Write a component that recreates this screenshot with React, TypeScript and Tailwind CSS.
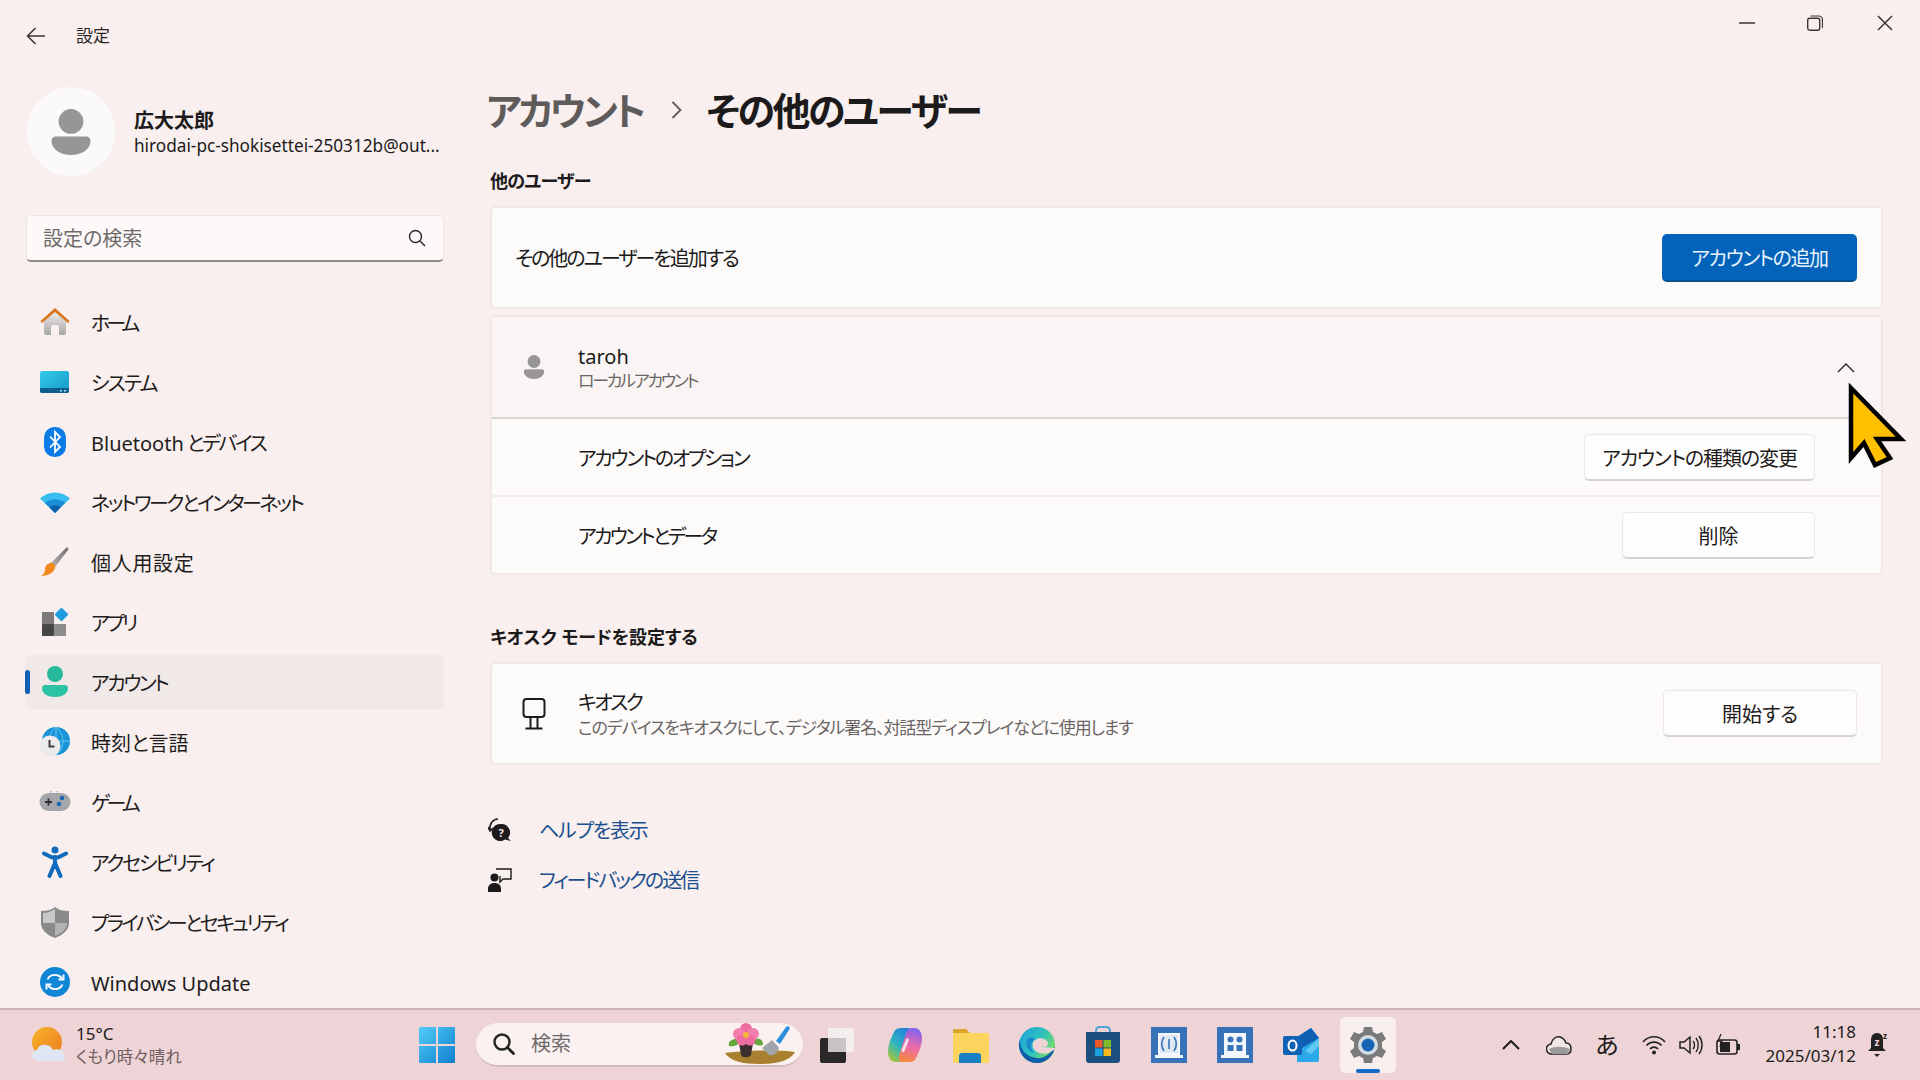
import React from "react";

const navItems = [
  { label: "ホーム", track: "tracking-[-4px]", icon: <HomeIcon /> },
  { label: "システム", track: "tracking-[-1.800px]", icon: <SystemIcon /> },
  { label: "Bluetooth", suffix: " とデバイス", track: "", icon: <BluetoothIcon /> },
  { label: "ネットワークとインターネット", track: "tracking-[-2.500px]", icon: <WifiIcon /> },
  { label: "個人用設定", track: "tracking-[0.700px]", icon: <BrushIcon /> },
  { label: "アプリ", track: "tracking-[-3px]", icon: <AppsIcon /> },
  { label: "アカウント", track: "tracking-[-2.400px]", icon: <AccountIcon />, active: true },
  { label: "時刻と言語", track: "", icon: <TimeIcon /> },
  { label: "ゲーム", track: "tracking-[-3.800px]", icon: <GameIcon /> },
  { label: "アクセシビリティ", track: "tracking-[-2.200px]", icon: <AccessIcon /> },
  { label: "プライバシーとセキュリティ", track: "tracking-[-2.700px]", icon: <ShieldIcon /> },
  { label: "Windows Update", track: "", icon: <UpdateIcon /> },
];

function HomeIcon() {
  return (
    <svg width="32" height="32" viewBox="0 0 32 32">
      <defs>
        <linearGradient id="homeWall" x1="0" y1="0" x2="0" y2="1">
          <stop offset="0" stopColor="#f3f1f0" />
          <stop offset="1" stopColor="#a9a7a6" />
        </linearGradient>
      </defs>
      <path d="M5 13 16 4l11 9v14a2 2 0 0 1-2 2h-5v-8a2 2 0 0 0-2-2h-4a2 2 0 0 0-2 2v8H7a2 2 0 0 1-2-2Z" fill="url(#homeWall)" />
      <path d="M1.500 15 16 2l14.500 13-1.500 2L16 6 3 17Z" fill="#d9761e" />
    </svg>
  );
}

function SystemIcon() {
  return (
    <svg width="30" height="24" viewBox="0 0 30 24">
      <defs>
        <linearGradient id="sysScreen" x1="0" y1="0" x2="1" y2="1">
          <stop offset="0" stopColor="#36cbe8" />
          <stop offset="1" stopColor="#1597c9" />
        </linearGradient>
      </defs>
      <rect x="0" y="1" width="29" height="22" rx="2" fill="url(#sysScreen)" />
      <path d="M0 18h29v3a2 2 0 0 1-2 2H2a2 2 0 0 1-2-2Z" fill="#0f5f8d" />
      <rect x="20" y="20" width="2" height="1.500" fill="#a7dcea" />
      <rect x="24" y="20" width="2" height="1.500" fill="#a7dcea" />
    </svg>
  );
}

function BluetoothIcon() {
  return (
    <svg width="24" height="32" viewBox="0 0 24 32">
      <rect x="1" y="1" width="22" height="30" rx="10.500" fill="#0b7ce6" />
      <path d="m7 10.500 10 10.500-5 5V6l5 5-10 10.500" fill="none" stroke="#fff" strokeWidth="1.800" />
    </svg>
  );
}

function WifiIcon() {
  return (
    <svg width="30" height="24" viewBox="0 0 30 24">
      <path d="M0 8.500C8 .5 22 .5 30 8.500L15 23Z" fill="#37bdf0" />
      <path d="M5 13C10 8 20 8 25 13L15 23Z" fill="#1c8ed8" />
      <path d="M9.500 17.500c3-3 8-3 11 0L15 23Z" fill="#0f5fa8" />
    </svg>
  );
}

function BrushIcon() {
  return (
    <svg width="30" height="30" viewBox="0 0 30 30">
      <defs>
        <linearGradient id="brushHandle" x1="0" y1="1" x2="1" y2="0">
          <stop offset="0" stopColor="#b9b7b6" />
          <stop offset="1" stopColor="#6e6c6c" />
        </linearGradient>
      </defs>
      <path d="M11 16 26 1c2-1 3 0 2 2L15 20Z" fill="url(#brushHandle)" />
      <path d="M10 16c3-1 6 2 5 5-1 4-6 8-14 8 3-2 4-4 4-7 0-3 2-5 5-6Z" fill="#f08a1d" />
    </svg>
  );
}

function AppsIcon() {
  return (
    <svg width="28" height="28" viewBox="0 0 28 28">
      <rect x="1" y="4" width="12" height="12" fill="#7c7a7b" />
      <rect x="1" y="16" width="12" height="12" rx="1" fill="#454446" />
      <rect x="13" y="16" width="12" height="12" fill="#8e8c8c" />
      <rect x="15.500" y="1.500" width="10" height="10" rx="1.500" fill="#1f9be0" transform="rotate(45 20.500 6.500)" />
    </svg>
  );
}

function AccountIcon() {
  return (
    <svg width="26" height="32" viewBox="0 0 26 32">
      <circle cx="13" cy="8" r="8" fill="#27b89c" />
      <path d="M0 22c0-2 1.500-3 3-3h20c1.500 0 3 1 3 3 0 6-6 9-13 9S0 28 0 22Z" fill="#2cc3a4" />
    </svg>
  );
}

function TimeIcon() {
  return (
    <svg width="32" height="32" viewBox="0 0 32 32">
      <circle cx="17" cy="15" r="14" fill="#1b93d8" />
      <path d="M17 1v28M3 15h28M17 1c-5 4-7 9-7 14s2 10 7 14M17 1c5 4 7 9 7 14s-2 10-7 14" fill="none" stroke="#5ec8ec" strokeWidth="1" />
      <circle cx="11" cy="20" r="10.500" fill="#eceaea" />
      <path d="M10.500 14v6.500h5" fill="none" stroke="#3e3c3c" strokeWidth="2" />
    </svg>
  );
}

function GameIcon() {
  return (
    <svg width="32" height="22" viewBox="0 0 32 22">
      <rect x="0.500" y="2" width="31" height="18" rx="9" fill="#a5a6a9" />
      <path d="M6 11h7M9.500 7.500v7" stroke="#2d2c2e" strokeWidth="1.800" />
      <circle cx="23" cy="7" r="2.300" fill="#1e66b5" />
      <circle cx="20" cy="13" r="2.300" fill="#1e66b5" />
      <circle cx="12" cy="0.800" r="0.600" fill="#666" />
      <circle cx="18" cy="0.800" r="0.600" fill="#666" />
    </svg>
  );
}

function AccessIcon() {
  return (
    <svg width="26" height="32" viewBox="0 0 26 32">
      <circle cx="13" cy="4" r="3.500" fill="#0f6cbd" />
      <path d="M2 7.500 9 11c3 1 5 1 8 0l7-3.500M13 11v8M13 17l-5.500 13M13 17l5.500 13" fill="none" stroke="#0f6cbd" strokeWidth="4" strokeLinecap="round" strokeLinejoin="round" />
    </svg>
  );
}

function ShieldIcon() {
  return (
    <svg width="30" height="32" viewBox="0 0 30 32">
      <path d="M15 1c4 3 8 4 14 4v12c0 7-6 12-14 15C7 29 1 24 1 17V5c6 0 10-1 14-4Z" fill="#8b8a8b" />
      <path d="M15 3c-3 2-7 4-12 4v10l12 0Z" fill="#c9c8c8" />
      <path d="M15 17h12c0 6-5 10-12 13Z" fill="#b3b2b2" />
    </svg>
  );
}

function UpdateIcon() {
  return (
    <svg width="30" height="30" viewBox="0 0 30 30">
      <circle cx="15" cy="15" r="15" fill="#0f86d6" />
      <path d="M7.500 12.500C9 8.500 14 7 18 8.500c1.500.5 3 1.500 4 3M22.500 17.500c-1.500 4-6.500 5.500-10.500 4-1.500-.5-3-1.500-4-3" fill="none" stroke="#fff" strokeWidth="1.900" />
      <path d="M23.500 7.500v5h-5M6.500 22.500v-5h5" fill="none" stroke="#fff" strokeWidth="1.900" />
    </svg>
  );
}

function StartIcon() {
  return (
    <svg width="36" height="36" viewBox="0 0 36 36">
      <defs>
        <linearGradient id="startA" x1="0" y1="0" x2="1" y2="1">
          <stop offset="0" stopColor="#52cdf6" />
          <stop offset="1" stopColor="#0f7fd0" />
        </linearGradient>
      </defs>
      <path d="M0 1a1 1 0 0 1 1-1h16v17H0ZM19 0h16a1 1 0 0 1 1 1v16H19ZM0 19h17v17H1a1 1 0 0 1-1-1ZM19 19h17v16a1 1 0 0 1-1 1H19Z" fill="url(#startA)" />
    </svg>
  );
}

function FlowerIcon() {
  return (
    <svg width="72" height="44" viewBox="0 0 72 44">
      <path d="M1 31c12-2 52-4 70-1-4 7-14 12-35 12C18 42 6 39 1 31Z" fill="#a9802f" />
      <path d="M12 17c-5 0-8 3-7 7 4 1 9 0 11-4ZM32 17c5-1 7 2 7 6-4 1-8 0-11-3Z" fill="#63a83f" />
      <path d="M15 21h14l-2 12c-1 3-9 3-10 0Z" fill="#3a2f2c" />
      <circle cx="22" cy="7" r="6" fill="#ee6c9f" />
      <circle cx="15" cy="12" r="6" fill="#f27fab" />
      <circle cx="29" cy="12" r="6" fill="#f27fab" />
      <circle cx="18" cy="18" r="5.500" fill="#ee6c9f" />
      <circle cx="26" cy="18" r="5.500" fill="#ee6c9f" />
      <circle cx="22" cy="13" r="3" fill="#f2b53a" />
      <path d="M38 26l10-8 7 8c-2 6-6 8-10 7Z" fill="#9ea4a8" />
      <path d="M52 19 62 5c2-2 5 0 3 3L56 22Z" fill="#2f8fdc" />
    </svg>
  );
}

function TaskViewIcon() {
  return (
    <svg width="36" height="36" viewBox="0 0 36 36">
      <rect x="2" y="11" width="26" height="25" rx="2" fill="#2b2829" />
      <rect x="10" y="1" width="26" height="24" rx="2" fill="#f3efef" fillOpacity="0.9" />
      <rect x="10" y="11" width="18" height="14" fill="#c8c4c4" />
    </svg>
  );
}

function CopilotIcon() {
  return (
    <svg width="36" height="36" viewBox="0 0 36 36">
      <defs>
        <linearGradient id="copA" x1="0.800" y1="0" x2="0.200" y2="1">
          <stop offset="0" stopColor="#1f7fe0" />
          <stop offset="0.550" stopColor="#2fb4c0" />
          <stop offset="1" stopColor="#a5c83a" />
        </linearGradient>
        <linearGradient id="copB" x1="0.600" y1="0" x2="0.400" y2="1">
          <stop offset="0" stopColor="#7f63ee" />
          <stop offset="0.550" stopColor="#f06aa8" />
          <stop offset="1" stopColor="#f5883f" />
        </linearGradient>
      </defs>
      <path d="M14 1h6c3 0 5 2 4 6l-7 23c-1 3-3 5-6 5H9c-5 0-8-4-8-10 0-7 3-14 6-20 1-3 4-4 7-4Z" fill="url(#copA)" />
      <path d="M22 35h-6c-3 0-5-2-4-6l7-23c1-3 3-5 6-5h2c5 0 8 4 8 10 0 7-3 14-6 20-1 3-4 4-7 4Z" fill="url(#copB)" />
      <path d="M19 12.500c.5-1.500 3-1.500 3 .5l-4.500 11c-.5 1.500-3 1.500-3-.5Z" fill="#f3dfe9" />
    </svg>
  );
}

function ExplorerIcon() {
  return (
    <svg width="36" height="36" viewBox="0 0 36 36">
      <path d="M0 3a1 1 0 0 1 1-1h12l4 4h19v30H0Z" fill="#dba52a" />
      <rect x="0" y="6" width="36" height="30" fill="#fbd45d" />
      <path d="M6 36v-7a3 3 0 0 1 3-3h16a3 3 0 0 1 3 3v7Z" fill="#1b7fc4" />
    </svg>
  );
}

function EdgeIcon() {
  return (
    <svg width="36" height="38" viewBox="0 0 36 38">
      <defs>
        <linearGradient id="edgeA" x1="0" y1="0" x2="1" y2="0.600">
          <stop offset="0" stopColor="#1f9fe0" />
          <stop offset="0.600" stopColor="#2fc3b8" />
          <stop offset="1" stopColor="#7ede63" />
        </linearGradient>
      </defs>
      <circle cx="18" cy="19" r="18" fill="url(#edgeA)" />
      <path d="M36 20C35 30 27 37 18 37 8 37 0 29 0 19c0-2 .5-4 1-5 0 10 7 17 16 18 8 1 15-4 19-12Z" fill="#0f5ca8" />
      <path d="M37 22c-6 6-14 7-19 4-5-3-6-9-2-12 4-3 10-2 13 2 1 1 0 4-3 5-2 0-2-1-3 0Z" fill="#eed4d6" />
      <path d="M16 13c-5 3-5 10-1 14-6-2-9-8-7-13 2-3 5-3 8-1Z" fill="#1a88cf" />
    </svg>
  );
}

function StoreIcon() {
  return (
    <svg width="34" height="38" viewBox="0 0 34 38">
      <path d="M10 8V5c0-3 2-4 4-4h6c2 0 4 1 4 4v3" fill="none" stroke="#4fa2d8" strokeWidth="2" />
      <path d="M0 6h34v28a3 3 0 0 1-3 3H3a3 3 0 0 1-3-3Z" fill="#1b4f80" />
      <rect x="9" y="14" width="7.500" height="7.500" fill="#ec5a2b" />
      <rect x="17.500" y="14" width="7.500" height="7.500" fill="#7fba2b" />
      <rect x="9" y="22.500" width="7.500" height="7.500" fill="#1ea1e0" />
      <rect x="17.500" y="22.500" width="7.500" height="7.500" fill="#fbbb1c" />
    </svg>
  );
}

function BlueAppIcon({ kind }: { kind: "info" | "grid" }) {
  return (
    <svg width="36" height="36" viewBox="0 0 36 36">
      <rect width="36" height="36" fill="#3873b9" />
      <path d="M7 6h22v22H7ZM4 28h28v3H4Z" fill="#f3f6fa" />
      <rect x="9" y="8" width="18" height="18" fill={kind === "info" ? "#dfe8f2" : "#f3f6fa"} />
      {kind === "info" ? (
        <g fill="none" stroke="#3873b9" strokeWidth="1.600">
          <path d="M13 10c-3 4-3 10 0 14M23 10c3 4 3 10 0 14M18 12v10" />
        </g>
      ) : (
        <g fill="#3873b9">
          <circle cx="13.500" cy="12.500" r="3" />
          <circle cx="22.500" cy="12.500" r="3" />
          <rect x="10.500" y="18" width="6" height="6" />
          <rect x="19.500" y="18" width="6" height="6" />
        </g>
      )}
    </svg>
  );
}

function OutlookIcon() {
  return (
    <svg width="36" height="36" viewBox="0 0 36 36">
      <path d="M14 10 28 1l8 10v22a2 2 0 0 1-2 2H14Z" fill="#29a9e8" />
      <path d="M14 10 28 1l8 10-22 13Z" fill="#0f5fb5" />
      <path d="M22 24l14-13v8l-8 8Z" fill="#62c8f2" />
      <rect x="0" y="9" width="19" height="19" rx="2" fill="#0f62b4" />
      <ellipse cx="9.500" cy="18.500" rx="4" ry="5" fill="none" stroke="#fff" strokeWidth="2" />
    </svg>
  );
}

function GearIcon() {
  return (
    <svg width="38" height="38" viewBox="0 0 38 38">
      <path d="M15 1h8l1 5 4 2 5-2 4 7-4 3v6l4 3-4 7-5-2-4 2-1 5h-8l-1-5-4-2-5 2-4-7 4-3v-6l-4-3 4-7 5 2 4-2Z" fill="#7a7a7c" strokeLinejoin="round" />
      <circle cx="19" cy="19" r="10" fill="#d5dce4" />
      <circle cx="19" cy="19" r="6.500" fill="#1465b5" />
    </svg>
  );
}

function Card({ children, className = "" }: { children: React.ReactNode; className?: string }) {
  return <div className={`rounded-[5px] border-2 border-[#efe8e7] bg-[#fdfafa] ${className}`}>{children}</div>;
}

function WhiteButton({ label, width }: { label: string; width: string }) {
  return (
    <button className={`flex h-[47px] items-center justify-center rounded-[5px] border border-[#ece7e6] border-b-2 border-b-[#d8d3d2] bg-[#fefdfd] pt-[4px] text-[20px] text-[#1e1b1b] ${width}`}>
      {label}
    </button>
  );
}

function Person({ size }: { size: number }) {
  return (
    <svg width={size} height={size} viewBox="0 0 44 52">
      <circle cx="22" cy="14" r="14" fill="#979595" />
      <path d="M0 36c0-3 2-5 5-5h34c3 0 5 2 5 5 0 10-10 16-22 16S0 46 0 36Z" fill="#979595" />
    </svg>
  );
}

export default function App() {
  return (
    <div className="relative flex h-screen w-screen flex-col overflow-hidden bg-[#f8efee] text-[#1c1a1a] [font-family:'Noto_Sans','Noto_Sans_CJK_JP',sans-serif] [font-feature-settings:'palt']">
      <div className="flex min-h-0 flex-1">
        {/* Sidebar */}
        <aside className="flex w-[490px] shrink-0 flex-col pl-[25px]">
          <div className="flex h-[72px] shrink-0 items-center">
            <svg width="20" height="18" viewBox="0 0 20 18" className="ml-[1px]">
              <path d="M19 9H2M9.500 1 1.500 9l8 8" fill="none" stroke="#3a3636" strokeWidth="1.500" />
            </svg>
            <span className="ml-[30px] text-[17px] text-[#2b2727]">設定</span>
          </div>

          <div className="mt-[15px] flex shrink-0 items-center">
            <div className="ml-[2px] flex h-[89px] w-[88px] items-center justify-center rounded-full bg-[#fbf9f9]">
              <Person size={46} />
            </div>
            <div className="ml-[19px] mt-[2px] w-[314px]">
              <div className="text-[20px] font-bold leading-[26px]">広大太郎</div>
              <div className="whitespace-nowrap text-[17.200px] leading-[24px]">hirodai-pc-shokisettei-250312b@out...</div>
            </div>
          </div>

          <div className="ml-px mt-[39px] flex h-[47px] w-[418px] shrink-0 items-center justify-between rounded-[5px] border border-[#ece5e4] border-b-2 border-b-[#8f8886] bg-[#fdf9f8] pl-[16px] pr-[17px]">
            <span className="pt-[1px] text-[20px] text-[#6f6a6a]">設定の検索</span>
            <svg width="18" height="18" viewBox="0 0 18 18">
              <circle cx="7.500" cy="7.500" r="6" fill="none" stroke="#2b2727" strokeWidth="1.400" />
              <path d="m12 12 5 5" stroke="#2b2727" strokeWidth="1.400" />
            </svg>
          </div>

          <nav className="mt-[33px] flex w-[419px] shrink-0 flex-col gap-[6px]">
            {navItems.map((item) => (
              <div
                key={item.label}
                className={`relative flex h-[54px] items-center rounded-[5px] ${item.active ? "bg-[#f1e9e8]" : ""}`}
              >
                {item.active && <span className="absolute left-0 top-[15px] h-[24px] w-[5px] rounded-full bg-[#0f5fb5]" />}
                <span className="ml-[12px] flex w-[36px] justify-center">{item.icon}</span>
                <span className={`ml-[18px] pt-[3px] text-[20px] text-[#1f1c1c] ${item.track}`}>
                  {item.label}
                  {item.suffix && <span className="tracking-[-2.300px]">{item.suffix}</span>}
                </span>
              </div>
            ))}
          </nav>
        </aside>

        {/* Main */}
        <main className="flex min-w-0 flex-1 flex-col">
          <div className="flex h-[46px] justify-end pr-[1px]">
            <div className="flex w-[68px] items-center justify-center">
              <svg width="16" height="2" viewBox="0 0 16 2"><path d="M0 1h16" stroke="#3a3636" strokeWidth="1.500" /></svg>
            </div>
            <div className="mr-[2px] flex w-[68px] items-center justify-center">
              <svg width="16" height="16" viewBox="0 0 16 16">
                <rect x="0.700" y="3.200" width="12" height="12" rx="2" fill="none" stroke="#3a3636" strokeWidth="1.400" />
                <path d="M3.500 1h8a4 4 0 0 1 4 4v8" fill="none" stroke="#3a3636" strokeWidth="1.200" />
              </svg>
            </div>
            <div className="flex w-[68px] items-center justify-center">
              <svg width="16" height="16" viewBox="0 0 16 16"><path d="m1 1 14 14M15 1 1 15" stroke="#3a3636" strokeWidth="1.500" /></svg>
            </div>
          </div>

          <div className="pr-[37px]">
            <div className="mt-[40px] flex h-[48px] items-center text-[38px] font-semibold leading-[48px] tracking-[-2.500px]">
              <span className="-ml-[4px] tracking-[-3.200px] text-[#5f5b5b]">アカウント</span>
              <svg width="12" height="20" viewBox="0 0 12 20" className="ml-[28px] mr-[23px]">
                <path d="m1.500 2 8 8-8 8" fill="none" stroke="#5f5b5b" strokeWidth="1.800" />
              </svg>
              <span>その他のユーザー</span>
            </div>

            <h2 className="mt-[33px] text-[18px] font-bold leading-[28px] tracking-[-0.800px]">他のユーザー</h2>

            <Card className="mt-[11px] flex h-[103px] items-center justify-between pl-[23px] pr-[24px]">
              <span className="pt-[2px] text-[20px] tracking-[-2px]">その他のユーザーを追加する</span>
              <button className="flex h-[48px] w-[195px] items-center justify-center rounded-[5px] border-b-2 border-b-[#03508f] bg-[#0363bb] pt-[4px] text-[20px] tracking-[-1.400px] text-[#e8f3fc]">
                アカウントの追加
              </button>
            </Card>

            <Card className="mt-[6px]">
              <div className="flex h-[102px] items-center justify-between border-b-2 border-b-[#d9d3d2] bg-[#faf5f4] pr-[26px]">
                <div className="flex items-center">
                  <span className="flex w-[84px] justify-center">
                    <Person size={24} />
                  </span>
                  <div className="ml-[2px] pt-[2px]">
                    <div className="text-[20px] leading-[26px]">taroh</div>
                    <div className="text-[17px] leading-[22px] tracking-[-2.300px] text-[#6a6565]">ローカルアカウント</div>
                  </div>
                </div>
                <svg width="18" height="10" viewBox="0 0 18 10" className="mt-[2px]">
                  <path d="m1 9 8-8 8 8" fill="none" stroke="#2b2727" strokeWidth="1.400" />
                </svg>
              </div>
              <div className="flex h-[78px] items-center justify-between border-b-2 border-b-[#f2ecea] pl-[86px] pr-[66px]">
                <span className="pt-[3px] text-[20px] tracking-[-2.300px]">アカウントのオプション</span>
                <WhiteButton label="アカウントの種類の変更" width="w-[231px] tracking-[-1.100px]" />
              </div>
              <div className="flex h-[76px] items-center justify-between pl-[86px] pr-[66px]">
                <span className="pt-[3px] text-[20px] tracking-[-2.700px]">アカウントとデータ</span>
                <WhiteButton label="削除" width="w-[193px]" />
              </div>
            </Card>

            <h2 className="mt-[48px] text-[18px] font-bold leading-[28px]">キオスク モードを設定する</h2>

            <Card className="mt-[11px] flex h-[103px] items-center justify-between pr-[24px]">
              <div className="flex items-center">
                <span className="flex w-[84px] justify-center">
                  <svg width="24" height="32" viewBox="0 0 24 32">
                    <rect x="1.500" y="1" width="21" height="18" rx="3" fill="none" stroke="#1c1a1a" strokeWidth="2" />
                    <path d="M8.500 19v11M15.500 19v11M3.500 30.500h17" fill="none" stroke="#1c1a1a" strokeWidth="2" />
                  </svg>
                </span>
                <div className="ml-[2px] pt-[2px]">
                  <div className="text-[20px] leading-[26px] tracking-[-2.400px]">キオスク</div>
                  <div className="text-[17px] leading-[24px] tracking-[-1.100px] text-[#6a6565]">このデバイスをキオスクにして、デジタル署名、対話型ディスプレイなどに使用します</div>
                </div>
              </div>
              <WhiteButton label="開始する" width="w-[194px]" />
            </Card>

            <div className="mt-[48px] flex h-[34px] items-center text-[20px] text-[#1c4f8f]">
              <span className="-ml-[2px] flex w-[49px]">
                <svg width="24" height="24" viewBox="0 0 24 24">
                  <path d="M2 12C1 6 5 1 10 1" fill="none" stroke="#1c1a1a" strokeWidth="1.500" />
                  <path d="M0 9l2 4 3-3" fill="none" stroke="#1c1a1a" strokeWidth="1.500" />
                  <path d="M13 6a8.500 8.500 0 0 1 7 14l3 3-6-1.500A8.500 8.500 0 1 1 13 6Z" fill="#1c1a1a" />
                  <text x="13" y="18.500" textAnchor="middle" fontSize="11" fontWeight="700" fill="#f8efee">?</text>
                </svg>
              </span>
              <span className="ml-[2px] pt-[2px] tracking-[-1.200px]">ヘルプを表示</span>
            </div>
            <div className="mt-[16px] flex h-[34px] items-center text-[20px] text-[#1c4f8f]">
              <span className="-ml-[2px] flex w-[49px]">
                <svg width="24" height="24" viewBox="0 0 24 24">
                  <circle cx="6.500" cy="9.500" r="4" fill="#1c1a1a" />
                  <path d="M0 24v-3c0-4 3-6 6.500-6s6.500 2 6.500 6v3Z" fill="#1c1a1a" />
                  <path d="M8 1h15v10h-8l-3 3V8" fill="none" stroke="#1c1a1a" strokeWidth="1.400" />
                </svg>
              </span>
              <span className="ml-[2px] pt-[2px] tracking-[-2px]">フィードバックの送信</span>
            </div>
          </div>
        </main>
      </div>

      {/* Taskbar */}
      <footer className="relative flex h-[72px] shrink-0 items-center border-t-2 border-t-[#c9b6b6] bg-[#eed4d6]">
        <div className="flex w-[404px] shrink-0 items-center pl-[32px]">
          <svg width="34" height="36" viewBox="0 0 34 36">
            <defs>
              <linearGradient id="sun" x1="0" y1="0" x2="1" y2="1">
                <stop offset="0" stopColor="#f7b52b" />
                <stop offset="1" stopColor="#ec7a1f" />
              </linearGradient>
            </defs>
            <circle cx="15" cy="15" r="15" fill="url(#sun)" />
            <path d="M6 34a5.500 5.500 0 0 1-1-11c1-4 5-6 9-5 3 0 6 2 7 5 5-2 11 1 12 6 1 3-1 5-3 5Z" fill="#dfe5f2" />
          </svg>
          <div className="ml-[10px]">
            <div className="text-[17px] leading-[23px]">15°C</div>
            <div className="text-[16.500px] leading-[23px] text-[#6f5f60]">くもり時々晴れ</div>
          </div>
        </div>
        <span className="flex w-[66px] shrink-0 justify-center"><StartIcon /></span>
        <div className="ml-[6px] flex h-[44px] w-[327px] shrink-0 items-center justify-between rounded-full border-b-2 border-b-[#d3bcbc] bg-[#fbf1f0] pl-[16px] pr-[7px]">
          <div className="flex items-center">
            <svg width="24" height="24" viewBox="0 0 24 24">
              <circle cx="10" cy="10" r="7.500" fill="none" stroke="#222" strokeWidth="2.400" />
              <path d="m15.500 15.500 6 6" stroke="#222" strokeWidth="2.800" strokeLinecap="round" />
            </svg>
            <span className="ml-[15px] text-[20px] text-[#6f6a6a]">検索</span>
          </div>
          <FlowerIcon />
        </div>
        <div className="flex shrink-0 items-center">
          <span className="flex w-[66px] justify-center"><TaskViewIcon /></span>
          <span className="ml-[3px] flex w-[66px] justify-center"><CopilotIcon /></span>
          <span className="flex w-[66px] justify-center"><ExplorerIcon /></span>
          <span className="flex w-[66px] justify-center"><EdgeIcon /></span>
          <span className="flex w-[66px] justify-center"><StoreIcon /></span>
          <span className="flex w-[66px] justify-center"><BlueAppIcon kind="info" /></span>
          <span className="flex w-[66px] justify-center"><BlueAppIcon kind="grid" /></span>
          <span className="flex w-[66px] justify-center"><OutlookIcon /></span>
          <span className="relative ml-[6px] flex h-[56px] w-[56px] items-center justify-center rounded-[5px] bg-[#f8eeee]">
            <GearIcon />
            <span className="absolute bottom-0 left-[16px] h-[4px] w-[24px] rounded-full bg-[#0f6cc4]" />
          </span>
        </div>
        <div className="ml-auto flex items-center pr-[31px]">
          <svg width="18" height="10" viewBox="0 0 18 10"><path d="m1 9 8-8 8 8" fill="none" stroke="#1c1a1a" strokeWidth="2" /></svg>
          <svg width="26" height="20" viewBox="0 0 26 20" className="ml-[26px]">
            <path d="M6 19a5 5 0 0 1-1-10C6 4 10 1 14 2c3 1 5 3 6 6 4 0 5 3 5 6s-2 5-5 5Z" fill="#f3e8e8" stroke="#222" strokeWidth="1.500" />
            <path d="M3 14c6-3 14-3 21 0l-2 5H6Z" fill="#9c9a9a" />
          </svg>
          <span className="ml-[23px] text-[24px] leading-none">あ</span>
          <svg width="24" height="20" viewBox="0 0 24 20" className="ml-[23px]">
            <path d="M1 7c6-7 16-7 22 0M4.500 10.500c4-4.500 11-4.500 15 0M8 14c2-2.500 6-2.500 8 0" fill="none" stroke="#222" strokeWidth="1.600" />
            <circle cx="12" cy="17.500" r="2" fill="#222" />
          </svg>
          <svg width="24" height="22" viewBox="0 0 24 22" className="ml-[13px]">
            <path d="M1 8v6h4l6 5V3L5 8Z" fill="none" stroke="#222" strokeWidth="1.500" />
            <path d="M14 7c2 2 2 6 0 8M17 4c3 4 3 10 0 14M20 2c4 5 4 13 0 18" fill="none" stroke="#222" strokeWidth="1.400" />
          </svg>
          <svg width="26" height="22" viewBox="0 0 26 22" className="ml-[12px]">
            <rect x="2" y="6" width="20" height="14" rx="2.500" fill="none" stroke="#222" strokeWidth="1.600" />
            <rect x="22" y="10" width="3" height="6" fill="#222" />
            <path d="M5 8h10v10H5Z" fill="#222" />
            <path d="M6 0 3 7h4l-2 6" fill="none" stroke="#222" strokeWidth="1.300" />
          </svg>
          <div className="mb-[2px] ml-[25px] text-right text-[17px] leading-[24px]">
            <div>11:18</div>
            <div>2025/03/12</div>
          </div>
          <svg width="22" height="28" viewBox="0 0 22 28" className="ml-[11px]">
            <path d="M10 2c-4 0-6 3-6 7v8l-3 3h18l-3-3V9c0-4-2-7-6-7Z" fill="#222" />
            <path d="M7 23h6l-3 3Z" fill="#222" />
            <text x="10" y="15" textAnchor="middle" fontSize="10" fontWeight="700" fill="#eed4d6">z</text>
            <text x="18" y="8" textAnchor="middle" fontSize="8" fontWeight="700" fill="#222">z</text>
          </svg>
        </div>
      </footer>

      {/* Mouse cursor */}
      <svg className="absolute left-[1846px] top-[378px]" width="66" height="92" viewBox="1846 378 66 92">
        <path d="M1851 388 1901 439 1877 439 1890 458 1875 465 1864 443 1851 458Z" fill="#ffc000" stroke="#000" strokeWidth="4.500" strokeLinejoin="miter" />
      </svg>
    </div>
  );
}
